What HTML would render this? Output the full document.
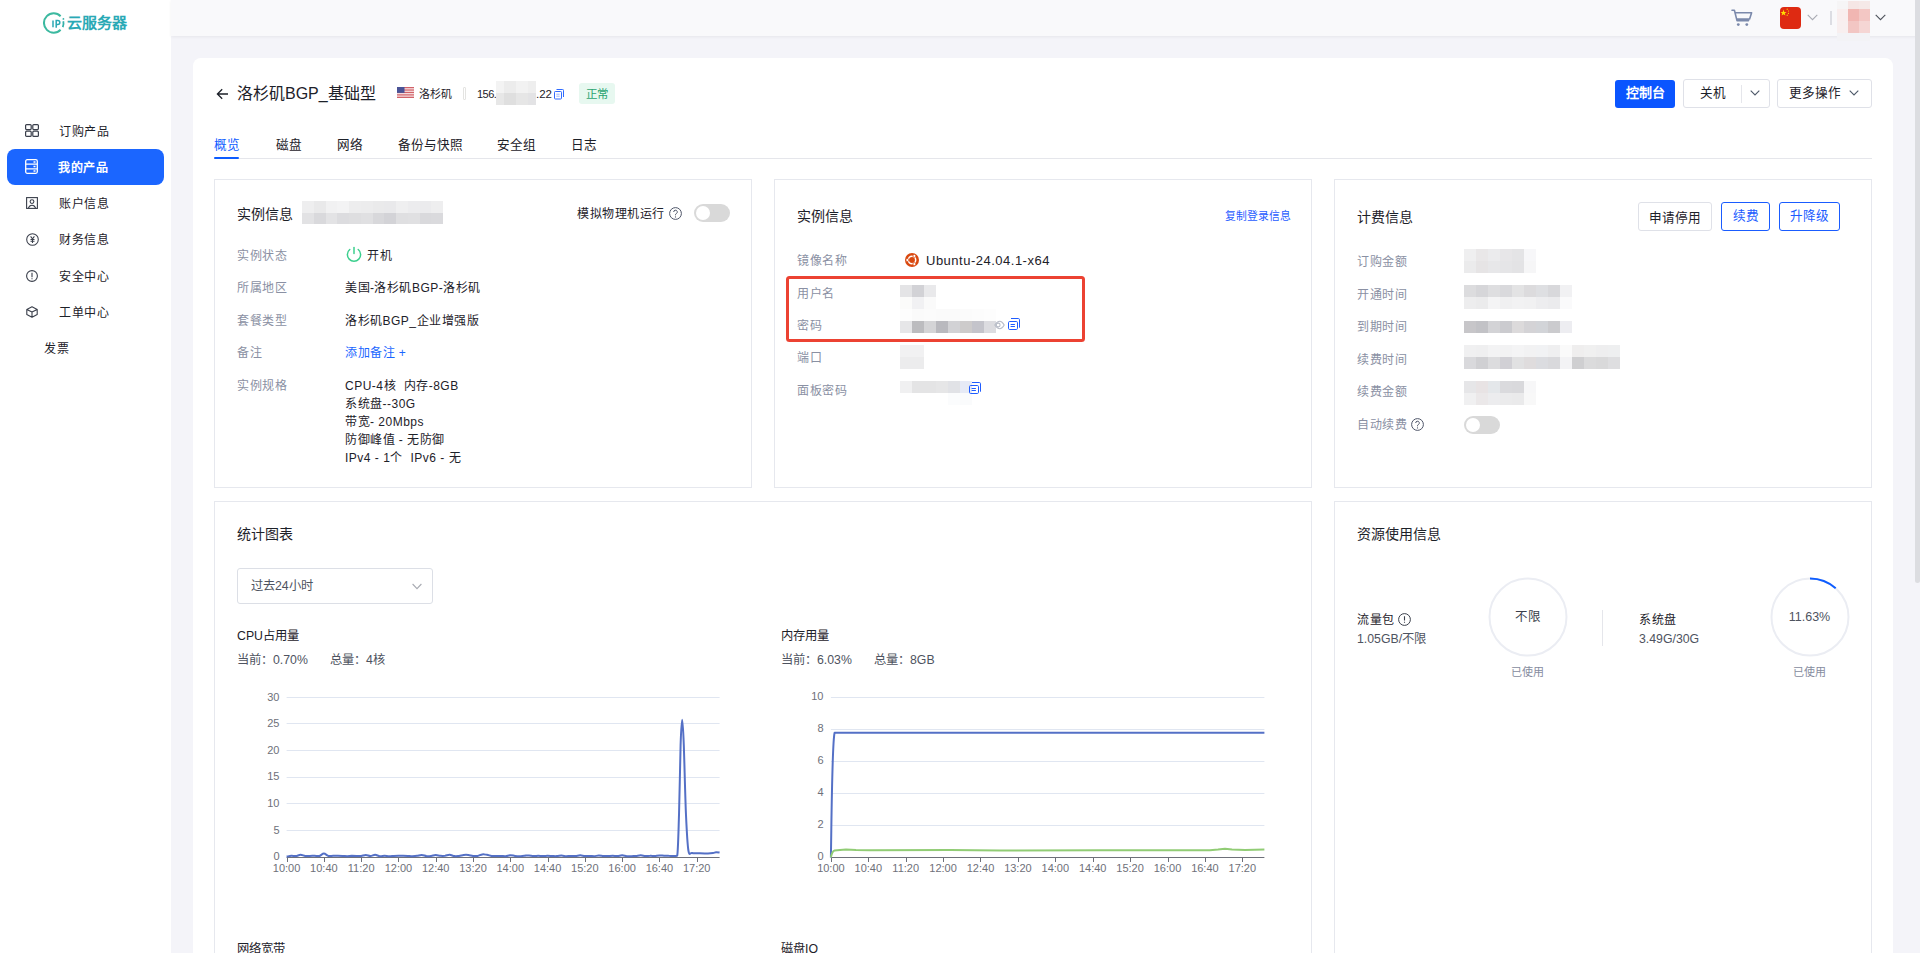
<!DOCTYPE html>
<html lang="zh-CN"><head><meta charset="utf-8">
<style>
*{box-sizing:border-box;margin:0;padding:0}
html,body{width:1920px;height:953px;overflow:hidden}
body{position:relative;background:#f4f4f9;font-family:"Liberation Sans",sans-serif;color:#1d2129;font-size:12.6px}
.a{position:absolute;white-space:nowrap}
#side{position:absolute;left:0;top:0;width:171px;height:953px;background:#fff}
#hdr{position:absolute;left:171px;top:0;width:1749px;height:36px;background:#f9f9fb;box-shadow:0 1px 3px rgba(0,0,0,0.06)}
.nav{position:absolute;left:59px;font-size:12px;letter-spacing:0.5px;color:#1d2129;line-height:20px}
.nic{position:absolute;left:25px}
#main{position:absolute;left:193px;top:58px;width:1700px;height:920px;background:#fff;border-radius:8px}
.card{position:absolute;border:1px solid #e6e8ee;background:#fff}
.ttl{position:absolute;font-size:14px;color:#1d2129;line-height:18px;white-space:nowrap}
.lbl{position:absolute;font-size:12px;letter-spacing:0.5px;color:#8a90a3;line-height:20px;white-space:nowrap}
.val{position:absolute;font-size:12px;letter-spacing:0.5px;color:#1d2129;line-height:20px;white-space:nowrap}
.blur{position:absolute;display:grid}
.blur i{display:block;width:12px;height:12px}
.btn{position:absolute;border:1px solid #dfe1e8;border-radius:3px;background:#fff;font-size:12.6px;color:#1d2129;text-align:center}
.tog{position:absolute;width:36px;height:18px;border-radius:9px;background:#d9d9d9}
.tog:after{content:"";position:absolute;left:2px;top:2px;width:14px;height:14px;border-radius:50%;background:#fff}
.ax{position:absolute;font-size:11.2px;color:#6e7079;line-height:12px;white-space:nowrap}
</style></head><body>

<!-- sidebar -->
<div id="side">
  <svg class="a" style="left:43px;top:12px" width="22" height="22" viewBox="0 0 22 22">
    <path d="M17.6 4.2 A9.7 9.7 0 1 0 17.6 17.8" fill="none" stroke="#3cb9a0" stroke-width="2"/>
    <path d="M20.3 9.2 A9.7 9.7 0 0 1 19.8 15.2" fill="none" stroke="#35b1a8" stroke-width="1.8"/>
    <circle cx="20.4" cy="6.9" r="0.9" fill="#35b1a8"/>
    <path d="M10 8.4v6.8" fill="none" stroke="#2aa7b3" stroke-width="1.5"/>
    <path d="M13.2 15.8V8.5h1.6a2 2 0 0 1 0 4h-1.6" fill="none" stroke="#2aa7b3" stroke-width="1.5"/>
  </svg>
  <div class="a" style="left:67px;top:13px;font-size:15px;font-weight:bold;color:#2aa9b5;line-height:20px;letter-spacing:0">云服务器</div>

  <div class="a" style="left:7px;top:149px;width:157px;height:36px;border-radius:8px;background:#1b66ff"></div>

  <svg class="nic" style="top:124px" width="14" height="13" viewBox="0 0 14 13"><g fill="none" stroke="#3a3f4b" stroke-width="1.2"><rect x="0.6" y="0.6" width="5.6" height="5" rx="1"/><rect x="7.8" y="0.6" width="5.6" height="5" rx="1"/><rect x="0.6" y="7.2" width="5.6" height="5.2" rx="1"/><rect x="7.8" y="7.2" width="5.6" height="5.2" rx="1"/></g></svg>
  <div class="nav" style="top:122px">订购产品</div>

  <svg class="nic" style="top:159px" width="13" height="15" viewBox="0 0 13 15"><g fill="none" stroke="#fff" stroke-width="1.3"><rect x="0.7" y="0.7" width="11.6" height="13.6" rx="1.5"/><path d="M0.7 5.2h11.6M0.7 9.8h11.6M8.5 3h2M8.5 7.5h2M8.5 12h2"/></g></svg>
  <div class="nav" style="left:58px;top:158px;color:#fff;font-weight:bold">我的产品</div>

  <svg class="nic" style="left:26px;top:197px" width="12" height="12" viewBox="0 0 12 12"><g fill="none" stroke="#3a3f4b" stroke-width="1.1"><rect x="0.6" y="0.6" width="10.8" height="10.8"/><circle cx="6" cy="4.6" r="1.9"/><path d="M2.4 11.2c0.6-2 2-3 3.6-3s3 1 3.6 3"/></g></svg>
  <div class="nav" style="top:194px">账户信息</div>

  <svg class="nic" style="left:26px;top:233px" width="13" height="13" viewBox="0 0 13 13"><g fill="none" stroke="#3a3f4b" stroke-width="1.05"><circle cx="6.5" cy="6.5" r="5.8"/><path d="M4.6 3.4L6.5 5.9L8.4 3.4M6.5 5.9v4.2M4.5 6.5h4M4.5 8.2h4"/></g></svg>
  <div class="nav" style="top:230px">财务信息</div>

  <svg class="nic" style="left:26px;top:270px" width="12" height="12" viewBox="0 0 12 12"><g fill="none" stroke="#3a3f4b" stroke-width="1.1"><circle cx="6" cy="6" r="5.4"/><path d="M6 2.8v4.4M6 8.3v1"/></g></svg>
  <div class="nav" style="top:267px">安全中心</div>

  <svg class="nic" style="left:26px;top:306px" width="12" height="12" viewBox="0 0 12 12"><g fill="none" stroke="#3a3f4b" stroke-width="1.1" stroke-linejoin="round"><path d="M6 0.7L11.2 3.4V8.6L6 11.3L0.8 8.6V3.4Z M0.8 3.4L6 6.1L11.2 3.4M6 6.1v5.2"/></g></svg>
  <div class="nav" style="top:303px">工单中心</div>

  <div class="nav" style="left:44px;top:339px">发票</div>
</div>

<!-- header -->
<div id="hdr"></div>

<!-- scrollbar thumb -->
<div class="a" style="left:1915px;top:0;width:5px;height:583px;background:#dcdde1;border-radius:0 0 3px 3px"></div>

<!-- main panel -->
<div id="main"></div>


<!-- header right -->
<svg class="a" style="left:1731px;top:9px" width="22" height="18" viewBox="0 0 22 18"><g fill="none" stroke="#7b89ab" stroke-width="1.6" stroke-linecap="round" stroke-linejoin="round"><path d="M1 1.2h2.4l2.6 10.4h11.6M4.4 3.8H20.6l-2 6.2H6"/></g><circle cx="7.3" cy="15.6" r="1.4" fill="#7b89ab"/><circle cx="15.8" cy="15.6" r="1.4" fill="#7b89ab"/></svg>
<div class="a" style="left:1780px;top:7px;width:21px;height:22px;border-radius:4px;background:#de2a12;overflow:hidden">
  <svg width="21" height="22" viewBox="0 0 21 22" style="position:absolute;left:0;top:0"><polygon points="3.5,2.6 4.3,4.9 6.6,4.9 4.8,6.3 5.4,8.6 3.5,7.2 1.6,8.6 2.2,6.3 0.4,4.9 2.7,4.9" fill="#ffde00"/><circle cx="7.2" cy="2.2" r="0.6" fill="#ffde00"/><circle cx="8.5" cy="4" r="0.6" fill="#ffde00"/><circle cx="8.5" cy="6.3" r="0.6" fill="#ffde00"/><circle cx="7.2" cy="8.2" r="0.6" fill="#ffde00"/></svg>
</div>
<svg class="a" style="left:1807px;top:14px" width="11" height="7" viewBox="0 0 11 7"><path d="M0.7 0.8L5.5 5.6L10.3 0.8" fill="none" stroke="#a9abb3" stroke-width="1.1"/></svg>
<div class="a" style="left:1830px;top:11px;width:1.5px;height:14px;background:#dcdde3"></div>
<div class="blur" style="left:1837px;top:1px;grid-template-columns:11px 11px 11px;grid-auto-rows:8px 12px 12px 8px">
  <i style="width:11px;height:8px;background:#f6f5f6"></i><i style="width:11px;height:8px;background:#f5e6e5"></i><i style="width:11px;height:8px;background:#f5e9e8"></i>
  <i style="width:11px;height:12px;background:#f9eeee"></i><i style="width:11px;height:12px;background:#f1b6b2"></i><i style="width:11px;height:12px;background:#f3c7c4"></i>
  <i style="width:11px;height:12px;background:#f8efef"></i><i style="width:11px;height:12px;background:#f2c6c3"></i><i style="width:11px;height:12px;background:#f5d6d4"></i>
  <i style="width:11px;height:8px;background:#f3f3f6"></i><i style="width:11px;height:8px;background:#f3f3f6"></i><i style="width:11px;height:8px;background:#f3f3f6"></i>
</div>
<svg class="a" style="left:1875px;top:14px" width="11" height="7" viewBox="0 0 11 7"><path d="M0.7 0.8L5.5 5.6L10.3 0.8" fill="none" stroke="#4e525c" stroke-width="1.1"/></svg>

<!-- page header -->
<svg class="a" style="left:216px;top:88px" width="13" height="12" viewBox="0 0 13 12"><path d="M12 6H1.5M6.2 1.2L1.4 6L6.2 10.8" fill="none" stroke="#1d2129" stroke-width="1.3"/></svg>
<div class="a" style="left:237px;top:84px;font-size:16px;line-height:20px;color:#1d2129">洛杉矶BGP_基础型</div>
<svg class="a" style="left:397px;top:87px" width="17" height="11" viewBox="0 0 17 11"><rect width="17" height="11" fill="#fff"/><g fill="#c9474f"><rect y="0" width="17" height="0.85"/><rect y="1.7" width="17" height="0.85"/><rect y="3.4" width="17" height="0.85"/><rect y="5.1" width="17" height="0.85"/><rect y="6.8" width="17" height="0.85"/><rect y="8.5" width="17" height="0.85"/><rect y="10.15" width="17" height="0.85"/></g><rect width="7.5" height="5.9" fill="#4a5396"/></svg>
<div class="a" style="left:419px;top:86px;font-size:11px;line-height:16px;color:#1d2129">洛杉矶</div>
<div class="a" style="left:463px;top:87px;width:3px;height:13px;border:1px solid #e4e4e2;border-radius:1px"></div>
<div class="a" style="left:477px;top:86px;font-size:11px;letter-spacing:-0.5px;line-height:16px;color:#1d2129">156.</div>
<div class="blur" style="left:496px;top:81px;grid-template-columns:8px 12px 12px 8px">
  <i style="width:8px;background:#f3f3f3"></i><i style="background:#ececec"></i><i style="background:#f2f2f2"></i><i style="width:8px;background:#eeeeee"></i>
  <i style="width:8px;background:#e7e7e7"></i><i style="background:#dfdfdf"></i><i style="background:#e6e6e6"></i><i style="width:8px;background:#e3e3e5"></i>
</div>
<div class="a" style="left:536px;top:86px;font-size:11.5px;line-height:16px;color:#1d2129">.22</div>
<svg class="a" style="left:554px;top:89px" width="10" height="11" viewBox="0 0 10 11"><g fill="none" stroke="#2f6bff" stroke-width="1"><rect x="0.5" y="2.5" width="7" height="7.5" rx="0.8"/><path d="M2.5 0.5h6.2a0.8 0.8 0 0 1 0.8 0.8v6.7"/><path d="M2.3 5.2h3.4M2.3 7.2h3.4" stroke-width="0.8" stroke="#7fa4ff"/></g></svg>
<div class="a" style="left:579px;top:83px;width:36px;height:21px;border-radius:3px;background:#e7f8f0;color:#2ba471;font-size:11.5px;line-height:21px;padding-top:1px;text-align:center">正常</div>

<div class="a" style="left:1615px;top:80px;width:60px;height:28px;border-radius:3px;background:#0a55ff;color:#fff;font-size:13px;line-height:26px;text-align:center;font-weight:bold">控制台</div>
<div class="btn" style="left:1683px;top:79px;width:87px;height:29px"></div>
<div class="a" style="left:1700px;top:85px;font-size:12.6px;line-height:16px">关机</div>
<div class="a" style="left:1741px;top:85px;width:1px;height:18px;background:#e5e6eb"></div>
<svg class="a" style="left:1750px;top:90px" width="10" height="6" viewBox="0 0 10 6"><path d="M0.7 0.7L5 5L9.3 0.7" fill="none" stroke="#4e5969" stroke-width="1.1"/></svg>
<div class="btn" style="left:1777px;top:79px;width:95px;height:29px"></div>
<div class="a" style="left:1789px;top:85px;font-size:12.6px;line-height:16px">更多操作</div>
<svg class="a" style="left:1849px;top:90px" width="10" height="6" viewBox="0 0 10 6"><path d="M0.7 0.7L5 5L9.3 0.7" fill="none" stroke="#4e5969" stroke-width="1.1"/></svg>

<!-- tabs -->
<div class="a" style="left:214px;top:158px;width:1658px;height:1px;background:#e5e6eb"></div>
<div class="a" style="left:214px;top:137px;font-size:12.6px;line-height:16px;color:#0d5cff">概览</div>
<div class="a" style="left:214px;top:157px;width:25px;height:2px;background:#0d5cff;border-radius:1px"></div>
<div class="a" style="left:276px;top:137px;font-size:12.6px;line-height:16px">磁盘</div>
<div class="a" style="left:337px;top:137px;font-size:12.6px;line-height:16px">网络</div>
<div class="a" style="left:398px;top:137px;font-size:12.6px;line-height:16px">备份与快照</div>
<div class="a" style="left:497px;top:137px;font-size:12.6px;line-height:16px">安全组</div>
<div class="a" style="left:571px;top:137px;font-size:12.6px;line-height:16px">日志</div>

<div class="card" style="left:214px;top:179px;width:538px;height:309px"></div>
<div class="ttl" style="left:237px;top:205px">实例信息</div>
<div class="blur" style="left:302px;top:201px;grid-template-columns:repeat(12,11.75px)"><i style="width:11.75px;height:11.5px;background:#eeeeef"></i><i style="width:11.75px;height:11.5px;background:#e9e9ea"></i><i style="width:11.75px;height:11.5px;background:#f1f1f2"></i><i style="width:11.75px;height:11.5px;background:#f3f3f4"></i><i style="width:11.75px;height:11.5px;background:#ededee"></i><i style="width:11.75px;height:11.5px;background:#ececed"></i><i style="width:11.75px;height:11.5px;background:#eaeaeb"></i><i style="width:11.75px;height:11.5px;background:#e9e9eb"></i><i style="width:11.75px;height:11.5px;background:#efeff0"></i><i style="width:11.75px;height:11.5px;background:#ececee"></i><i style="width:11.75px;height:11.5px;background:#ebebed"></i><i style="width:11.75px;height:11.5px;background:#eeeeef"></i><i style="width:11.75px;height:11.5px;background:#e2e2e4"></i><i style="width:11.75px;height:11.5px;background:#d9d9dc"></i><i style="width:11.75px;height:11.5px;background:#e3e3e5"></i><i style="width:11.75px;height:11.5px;background:#dcdcdf"></i><i style="width:11.75px;height:11.5px;background:#dedee0"></i><i style="width:11.75px;height:11.5px;background:#e0e0e2"></i><i style="width:11.75px;height:11.5px;background:#d8d8db"></i><i style="width:11.75px;height:11.5px;background:#d3d3d7"></i><i style="width:11.75px;height:11.5px;background:#dfdfe1"></i><i style="width:11.75px;height:11.5px;background:#e0e0e2"></i><i style="width:11.75px;height:11.5px;background:#d9d9dc"></i><i style="width:11.75px;height:11.5px;background:#dadadd"></i></div>
<div class="a" style="left:577px;top:205px;font-size:12px;letter-spacing:0.5px;line-height:18px;color:#1d2129">模拟物理机运行</div>
<svg class="a" style="left:669px;top:207px" width="13" height="13" viewBox="0 0 13 13"><circle cx="6.5" cy="6.5" r="5.9" fill="none" stroke="#4e5568" stroke-width="1"/><path d="M4.7 5a1.8 1.8 0 1 1 2.6 1.6c-0.6 0.3-0.8 0.6-0.8 1.2v0.5" fill="none" stroke="#4e5568" stroke-width="1"/><circle cx="6.5" cy="9.9" r="0.6" fill="#4e5568"/></svg>
<div class="tog" style="left:694px;top:204px"></div>
<div class="lbl" style="left:237px;top:246px">实例状态</div>
<div class="lbl" style="left:237px;top:278px">所属地区</div>
<div class="lbl" style="left:237px;top:311px">套餐类型</div>
<div class="lbl" style="left:237px;top:343px">备注</div>
<div class="lbl" style="left:237px;top:376px">实例规格</div>
<svg class="a" style="left:346px;top:246px" width="16" height="17" viewBox="0 0 16 17"><path d="M3.76,3.54 A6.6,6.6 0 1 0 12.24,3.54" fill="none" stroke="#3ccf8e" stroke-width="1.5" stroke-linecap="round"/><path d="M8 1.6v6" stroke="#3ccf8e" stroke-width="1.5" stroke-linecap="round"/></svg>
<div class="val" style="left:367px;top:246px">开机</div>
<div class="val" style="left:345px;top:278px">美国-洛杉矶BGP-洛杉矶</div>
<div class="val" style="left:345px;top:311px">洛杉矶BGP_企业增强版</div>
<div class="val" style="left:345px;top:343px;color:#1a66ff">添加备注 +</div>
<div class="val" style="left:345px;top:376px">CPU-4核&nbsp;&nbsp;内存-8GB</div>
<div class="val" style="left:345px;top:394px">系统盘--30G</div>
<div class="val" style="left:345px;top:412px">带宽- 20Mbps</div>
<div class="val" style="left:345px;top:430px">防御峰值 - 无防御</div>
<div class="val" style="left:345px;top:448px">IPv4 - 1个&nbsp;&nbsp;IPv6 - 无</div>
<div class="card" style="left:774px;top:179px;width:538px;height:309px"></div>
<div class="ttl" style="left:797px;top:207px">实例信息</div>
<div class="a" style="left:1225px;top:208px;font-size:10.8px;line-height:16px;color:#1f5cff">复制登录信息</div>
<div class="lbl" style="left:797px;top:251px">镜像名称</div>
<div class="lbl" style="left:797px;top:284px">用户名</div>
<div class="lbl" style="left:797px;top:316px">密码</div>
<div class="lbl" style="left:797px;top:348px">端口</div>
<div class="lbl" style="left:797px;top:381px">面板密码</div>
<svg class="a" style="left:905px;top:253px" width="14" height="14" viewBox="0 0 14 14"><circle cx="7" cy="7" r="7" fill="#d9480f"/><circle cx="7" cy="7" r="3.7" fill="none" stroke="#fff" stroke-width="1.5"/><g fill="#fff" stroke="#d9480f" stroke-width="0.7"><circle cx="2.3" cy="7" r="1.5"/><circle cx="9.35" cy="2.93" r="1.5"/><circle cx="9.35" cy="11.07" r="1.5"/></g></svg>
<div class="val" style="left:926px;top:251px;font-size:13px">Ubuntu-24.04.1-x64</div>
<div class="a" style="left:786px;top:276px;width:299px;height:66px;border:3px solid #ec4232;border-radius:3.5px"></div>
<div class="blur" style="left:900px;top:285px;grid-template-columns:repeat(3,12px)"><i style="width:12px;height:12px;background:#e4e4e6"></i><i style="width:12px;height:12px;background:#d2d2d6"></i><i style="width:12px;height:12px;background:#e9e9eb"></i><i style="width:12px;height:12px;background:#fbfbfa"></i><i style="width:12px;height:12px;background:#f1f1f3"></i><i style="width:12px;height:12px;background:#fafafa"></i></div>
<div class="blur" style="left:900px;top:309px;grid-template-columns:repeat(8,12px)"><i style="width:12px;height:12px;background:#fdfdfd"></i><i style="width:12px;height:12px;background:#fafafa"></i><i style="width:12px;height:12px;background:#fbfbfb"></i><i style="width:12px;height:12px;background:#fafafa"></i><i style="width:12px;height:12px;background:#fafafa"></i><i style="width:12px;height:12px;background:#fbfbfb"></i><i style="width:12px;height:12px;background:#fcfcfc"></i><i style="width:12px;height:12px;background:#fdfdfd"></i><i style="width:12px;height:12px;background:#e6e6e8"></i><i style="width:12px;height:12px;background:#bcbcbf"></i><i style="width:12px;height:12px;background:#d4d4d6"></i><i style="width:12px;height:12px;background:#b9b9be"></i><i style="width:12px;height:12px;background:#d2d2d5"></i><i style="width:12px;height:12px;background:#cdcbcb"></i><i style="width:12px;height:12px;background:#c4c4cb"></i><i style="width:12px;height:12px;background:#dcdce0"></i></div>
<svg class="a" style="left:994px;top:320px" width="11" height="10" viewBox="0 0 11 10"><path d="M0.8 5c1.6-2.6 3.3-3.8 5-3.8s3 1.2 4.4 3.8c-1.4 2.6-2.7 3.8-4.4 3.8S2.4 7.6 0.8 5z" fill="none" stroke="#b9bdc8" stroke-width="1.1"/><circle cx="4.2" cy="5" r="1.9" fill="none" stroke="#b9bdc8" stroke-width="1.1"/></svg>
<svg class="a" style="left:1008px;top:318px" width="12" height="12" viewBox="0 0 12 12"><g fill="none" stroke="#1f5cff" stroke-width="1"><rect x="0.5" y="3.5" width="9" height="8" rx="1.2"/><path d="M3 0.5h7.3a1.2 1.2 0 0 1 1.2 1.2v8"/><path d="M2.6 6.5h4.3M2.6 8.5h4.3"/></g></svg>
<div class="blur" style="left:900px;top:345px;grid-template-columns:repeat(2,12px)"><i style="width:12px;height:12px;background:#f1f1f2"></i><i style="width:12px;height:12px;background:#f1f1f2"></i><i style="width:12px;height:12px;background:#ececed"></i><i style="width:12px;height:12px;background:#ececed"></i></div>
<div class="blur" style="left:900px;top:381px;grid-template-columns:repeat(6,12px)"><i style="width:12px;height:12px;background:#f0f0f1"></i><i style="width:12px;height:12px;background:#e4e4e5"></i><i style="width:12px;height:12px;background:#e4e4e5"></i><i style="width:12px;height:12px;background:#e6e6e7"></i><i style="width:12px;height:12px;background:#e1e2e6"></i><i style="width:12px;height:12px;background:#e6eaf6"></i><i style="width:12px;height:12px;background:#ffffff"></i><i style="width:12px;height:12px;background:#ffffff"></i><i style="width:12px;height:12px;background:#ffffff"></i><i style="width:12px;height:12px;background:#ffffff"></i><i style="width:12px;height:12px;background:#fbfcfd"></i><i style="width:12px;height:12px;background:#fafbfc"></i></div>
<svg class="a" style="left:969px;top:382px" width="12" height="12" viewBox="0 0 12 12"><g fill="none" stroke="#1f5cff" stroke-width="1"><rect x="0.5" y="3.5" width="9" height="8" rx="1.2"/><path d="M3 0.5h7.3a1.2 1.2 0 0 1 1.2 1.2v8"/><path d="M2.6 6.5h4.3M2.6 8.5h4.3"/></g></svg>
<div class="card" style="left:1334px;top:179px;width:538px;height:309px"></div>
<div class="ttl" style="left:1357px;top:208px">计费信息</div>
<div class="btn" style="left:1638px;top:202px;width:74px;height:29px;line-height:27px;padding-top:2px">申请停用</div>
<div class="btn" style="left:1721px;top:202px;width:49px;height:29px;line-height:25px;padding-top:1px;border:1.5px solid #1a5cff;color:#1a5cff">续费</div>
<div class="btn" style="left:1779px;top:202px;width:61px;height:29px;line-height:25px;padding-top:1px;border:1.5px solid #1a5cff;color:#1a5cff">升降级</div>
<div class="lbl" style="left:1357px;top:252px">订购金额</div>
<div class="lbl" style="left:1357px;top:285px">开通时间</div>
<div class="lbl" style="left:1357px;top:317px">到期时间</div>
<div class="lbl" style="left:1357px;top:350px">续费时间</div>
<div class="lbl" style="left:1357px;top:382px">续费金额</div>
<div class="lbl" style="left:1357px;top:415px">自动续费</div>
<svg class="a" style="left:1411px;top:418px" width="13" height="13" viewBox="0 0 13 13"><circle cx="6.5" cy="6.5" r="5.9" fill="none" stroke="#4e5568" stroke-width="1"/><path d="M4.7 5a1.8 1.8 0 1 1 2.6 1.6c-0.6 0.3-0.8 0.6-0.8 1.2v0.5" fill="none" stroke="#4e5568" stroke-width="1"/><circle cx="6.5" cy="9.9" r="0.6" fill="#4e5568"/></svg>
<div class="blur" style="left:1464px;top:249px;grid-template-columns:repeat(6,12px)"><i style="width:12px;height:12px;background:#efeff0"></i><i style="width:12px;height:12px;background:#e9e7e8"></i><i style="width:12px;height:12px;background:#ebebed"></i><i style="width:12px;height:12px;background:#e7e6e8"></i><i style="width:12px;height:12px;background:#e4e4e6"></i><i style="width:12px;height:12px;background:#f7f7f9"></i><i style="width:12px;height:12px;background:#ebebec"></i><i style="width:12px;height:12px;background:#e6e4e5"></i><i style="width:12px;height:12px;background:#e7e7e9"></i><i style="width:12px;height:12px;background:#e5e5e7"></i><i style="width:12px;height:12px;background:#e3e3e5"></i><i style="width:12px;height:12px;background:#f6f6f7"></i></div>
<div class="blur" style="left:1464px;top:285px;grid-template-columns:repeat(9,12px)"><i style="width:12px;height:12px;background:#dcdcde"></i><i style="width:12px;height:12px;background:#d6d6d9"></i><i style="width:12px;height:12px;background:#dedee0"></i><i style="width:12px;height:12px;background:#d9d9dc"></i><i style="width:12px;height:12px;background:#e3e3e4"></i><i style="width:12px;height:12px;background:#dcdbdd"></i><i style="width:12px;height:12px;background:#dedfe2"></i><i style="width:12px;height:12px;background:#d8d8db"></i><i style="width:12px;height:12px;background:#f1f1f3"></i><i style="width:12px;height:12px;background:#ededee"></i><i style="width:12px;height:12px;background:#ebebec"></i><i style="width:12px;height:12px;background:#f4f4f5"></i><i style="width:12px;height:12px;background:#f0f0f1"></i><i style="width:12px;height:12px;background:#f2f2f3"></i><i style="width:12px;height:12px;background:#f1f1f2"></i><i style="width:12px;height:12px;background:#ededef"></i><i style="width:12px;height:12px;background:#ebebed"></i><i style="width:12px;height:12px;background:#fafafb"></i></div>
<div class="blur" style="left:1464px;top:321px;grid-template-columns:repeat(9,12px)"><i style="width:12px;height:12px;background:#c7c6c9"></i><i style="width:12px;height:12px;background:#c2c2c6"></i><i style="width:12px;height:12px;background:#d3d3d6"></i><i style="width:12px;height:12px;background:#cbcbcf"></i><i style="width:12px;height:12px;background:#dcdadb"></i><i style="width:12px;height:12px;background:#d4d3d6"></i><i style="width:12px;height:12px;background:#d2d4d8"></i><i style="width:12px;height:12px;background:#cbcbce"></i><i style="width:12px;height:12px;background:#ededf1"></i></div>
<div class="blur" style="left:1464px;top:345px;grid-template-columns:repeat(13,12px)"><i style="width:12px;height:12px;background:#f0f0f1"></i><i style="width:12px;height:12px;background:#efeff0"></i><i style="width:12px;height:12px;background:#f3f3f4"></i><i style="width:12px;height:12px;background:#f2f2f3"></i><i style="width:12px;height:12px;background:#f4f4f5"></i><i style="width:12px;height:12px;background:#f2f2f3"></i><i style="width:12px;height:12px;background:#f1f2f4"></i><i style="width:12px;height:12px;background:#efeff0"></i><i style="width:12px;height:12px;background:#fafafa"></i><i style="width:12px;height:12px;background:#efeeee"></i><i style="width:12px;height:12px;background:#f0f0f0"></i><i style="width:12px;height:12px;background:#eeeeef"></i><i style="width:12px;height:12px;background:#eeeff0"></i><i style="width:12px;height:12px;background:#d9d9dc"></i><i style="width:12px;height:12px;background:#d0d0d3"></i><i style="width:12px;height:12px;background:#dcdcde"></i><i style="width:12px;height:12px;background:#d1d0d5"></i><i style="width:12px;height:12px;background:#e1e1e2"></i><i style="width:12px;height:12px;background:#dfdcdd"></i><i style="width:12px;height:12px;background:#dbdce0"></i><i style="width:12px;height:12px;background:#d9d9dc"></i><i style="width:12px;height:12px;background:#f3f3f5"></i><i style="width:12px;height:12px;background:#cfcfd1"></i><i style="width:12px;height:12px;background:#dbdbdc"></i><i style="width:12px;height:12px;background:#d9d9da"></i><i style="width:12px;height:12px;background:#dedee0"></i></div>
<div class="blur" style="left:1464px;top:381px;grid-template-columns:repeat(6,12px)"><i style="width:12px;height:12px;background:#e6e6e8"></i><i style="width:12px;height:12px;background:#e8e3e4"></i><i style="width:12px;height:12px;background:#e4e7ea"></i><i style="width:12px;height:12px;background:#dadadd"></i><i style="width:12px;height:12px;background:#d9d9dc"></i><i style="width:12px;height:12px;background:#f7f7f8"></i><i style="width:12px;height:12px;background:#f0f0f1"></i><i style="width:12px;height:12px;background:#ebe8e9"></i><i style="width:12px;height:12px;background:#ececee"></i><i style="width:12px;height:12px;background:#ebebec"></i><i style="width:12px;height:12px;background:#eaeaeb"></i><i style="width:12px;height:12px;background:#f8f8f8"></i></div>
<div class="tog" style="left:1464px;top:416px"></div>

<div class="card" style="left:214px;top:501px;width:1098px;height:470px"></div>
<div class="ttl" style="left:237px;top:525px">统计图表</div>
<div class="a" style="left:237px;top:568px;width:196px;height:36px;border:1px solid #dcdfe6;border-radius:3px"></div>
<div class="a" style="left:251px;top:577px;font-size:12.3px;line-height:18px;color:#4e5360">过去24小时</div>
<svg class="a" style="left:412px;top:583px" width="10" height="7" viewBox="0 0 10 7"><path d="M0.6 1L5 5.6L9.4 1" fill="none" stroke="#a8abb2" stroke-width="1.1"/></svg>
<div class="a" style="left:237px;top:627px;font-size:12.3px;line-height:18px;color:#1d2129">CPU占用量</div>
<div class="a" style="left:237px;top:651px;font-size:12.3px;line-height:18px;color:#4e5360">当前：0.70%</div>
<div class="a" style="left:330px;top:651px;font-size:12.3px;line-height:18px;color:#4e5360">总量：4核</div>
<div class="a" style="left:781px;top:627px;font-size:12.3px;line-height:18px;color:#1d2129">内存用量</div>
<div class="a" style="left:781px;top:651px;font-size:12.3px;line-height:18px;color:#4e5360">当前：6.03%</div>
<div class="a" style="left:874px;top:651px;font-size:12.3px;line-height:18px;color:#4e5360">总量：8GB</div>
<div class="a" style="left:237px;top:940px;font-size:12.3px;line-height:18px;color:#1d2129">网络宽带</div>
<div class="a" style="left:781px;top:940px;font-size:12.3px;line-height:18px;color:#1d2129">磁盘IO</div>
<svg class="a" style="left:0;top:0" width="1920" height="953" viewBox="0 0 1920 953"><line x1="286.6" y1="697.5" x2="719.6" y2="697.5" stroke="#e0e6f1" stroke-width="1"/><text x="279.5" y="700.5" text-anchor="end" font-size="11" fill="#6e7079" font-family="Liberation Sans">30</text><line x1="286.6" y1="723.5" x2="719.6" y2="723.5" stroke="#e0e6f1" stroke-width="1"/><text x="279.5" y="727.1" text-anchor="end" font-size="11" fill="#6e7079" font-family="Liberation Sans">25</text><line x1="286.6" y1="750.5" x2="719.6" y2="750.5" stroke="#e0e6f1" stroke-width="1"/><text x="279.5" y="753.7" text-anchor="end" font-size="11" fill="#6e7079" font-family="Liberation Sans">20</text><line x1="286.6" y1="777.5" x2="719.6" y2="777.5" stroke="#e0e6f1" stroke-width="1"/><text x="279.5" y="780.3" text-anchor="end" font-size="11" fill="#6e7079" font-family="Liberation Sans">15</text><line x1="286.6" y1="803.5" x2="719.6" y2="803.5" stroke="#e0e6f1" stroke-width="1"/><text x="279.5" y="806.9" text-anchor="end" font-size="11" fill="#6e7079" font-family="Liberation Sans">10</text><line x1="286.6" y1="830.5" x2="719.6" y2="830.5" stroke="#e0e6f1" stroke-width="1"/><text x="279.5" y="833.5" text-anchor="end" font-size="11" fill="#6e7079" font-family="Liberation Sans">5</text><text x="279.5" y="860.0" text-anchor="end" font-size="11" fill="#6e7079" font-family="Liberation Sans">0</text><line x1="286.6" y1="857.5" x2="719.6" y2="857.5" stroke="#6e7079" stroke-width="1"/><line x1="287.5" y1="857" x2="287.5" y2="862" stroke="#6e7079" stroke-width="1"/><text x="286.6" y="871.5" text-anchor="middle" font-size="11" fill="#6e7079" font-family="Liberation Sans">10:00</text><line x1="324.5" y1="857" x2="324.5" y2="862" stroke="#6e7079" stroke-width="1"/><text x="323.88" y="871.5" text-anchor="middle" font-size="11" fill="#6e7079" font-family="Liberation Sans">10:40</text><line x1="361.5" y1="857" x2="361.5" y2="862" stroke="#6e7079" stroke-width="1"/><text x="361.16" y="871.5" text-anchor="middle" font-size="11" fill="#6e7079" font-family="Liberation Sans">11:20</text><line x1="398.5" y1="857" x2="398.5" y2="862" stroke="#6e7079" stroke-width="1"/><text x="398.44000000000005" y="871.5" text-anchor="middle" font-size="11" fill="#6e7079" font-family="Liberation Sans">12:00</text><line x1="436.5" y1="857" x2="436.5" y2="862" stroke="#6e7079" stroke-width="1"/><text x="435.72" y="871.5" text-anchor="middle" font-size="11" fill="#6e7079" font-family="Liberation Sans">12:40</text><line x1="473.5" y1="857" x2="473.5" y2="862" stroke="#6e7079" stroke-width="1"/><text x="473.0" y="871.5" text-anchor="middle" font-size="11" fill="#6e7079" font-family="Liberation Sans">13:20</text><line x1="510.5" y1="857" x2="510.5" y2="862" stroke="#6e7079" stroke-width="1"/><text x="510.28000000000003" y="871.5" text-anchor="middle" font-size="11" fill="#6e7079" font-family="Liberation Sans">14:00</text><line x1="548.5" y1="857" x2="548.5" y2="862" stroke="#6e7079" stroke-width="1"/><text x="547.5600000000001" y="871.5" text-anchor="middle" font-size="11" fill="#6e7079" font-family="Liberation Sans">14:40</text><line x1="585.5" y1="857" x2="585.5" y2="862" stroke="#6e7079" stroke-width="1"/><text x="584.84" y="871.5" text-anchor="middle" font-size="11" fill="#6e7079" font-family="Liberation Sans">15:20</text><line x1="622.5" y1="857" x2="622.5" y2="862" stroke="#6e7079" stroke-width="1"/><text x="622.12" y="871.5" text-anchor="middle" font-size="11" fill="#6e7079" font-family="Liberation Sans">16:00</text><line x1="659.5" y1="857" x2="659.5" y2="862" stroke="#6e7079" stroke-width="1"/><text x="659.4000000000001" y="871.5" text-anchor="middle" font-size="11" fill="#6e7079" font-family="Liberation Sans">16:40</text><line x1="697.5" y1="857" x2="697.5" y2="862" stroke="#6e7079" stroke-width="1"/><text x="696.6800000000001" y="871.5" text-anchor="middle" font-size="11" fill="#6e7079" font-family="Liberation Sans">17:20</text><path d="M286.6,856.6 C287.4,856.5 289.7,855.9 291.3,855.8 C292.8,855.7 294.4,856.2 295.9,856.1 C297.5,855.9 299.0,854.8 300.6,854.8 C302.1,854.8 303.7,855.8 305.2,856.0 C306.8,856.2 308.3,856.0 309.9,855.9 C311.5,855.9 313.0,855.8 314.6,855.8 C316.1,855.8 317.7,856.4 319.2,856.0 C320.8,855.6 322.3,853.6 323.9,853.6 C325.4,853.6 327.0,855.6 328.5,856.0 C330.1,856.3 331.6,855.8 333.2,855.8 C334.8,855.8 336.3,855.8 337.9,855.8 C339.4,855.8 341.0,855.9 342.5,856.0 C344.1,856.0 345.6,856.2 347.2,856.2 C348.7,856.1 350.3,855.9 351.8,855.8 C353.4,855.8 354.9,855.8 356.5,855.9 C358.1,855.9 359.6,856.2 361.2,856.1 C362.7,855.9 364.3,855.0 365.8,855.0 C367.4,855.0 368.9,856.1 370.5,856.0 C372.0,856.0 373.6,854.8 375.1,854.8 C376.7,854.8 378.2,856.1 379.8,856.2 C381.4,856.4 382.9,855.8 384.5,855.8 C386.0,855.8 387.6,856.2 389.1,856.2 C390.7,856.2 392.2,856.0 393.8,855.9 C395.3,855.8 396.9,855.8 398.4,855.8 C400.0,855.8 401.5,855.8 403.1,855.8 C404.7,855.8 406.2,855.8 407.8,855.9 C409.3,856.0 410.9,856.2 412.4,856.2 C414.0,856.1 415.5,856.0 417.1,855.8 C418.6,855.6 420.2,855.0 421.7,855.0 C423.3,855.0 424.8,855.9 426.4,856.1 C428.0,856.2 429.5,856.1 431.1,855.9 C432.6,855.8 434.2,855.1 435.7,855.1 C437.3,855.1 438.8,855.7 440.4,855.8 C441.9,855.9 443.5,855.9 445.0,855.8 C446.6,855.6 448.1,854.7 449.7,854.8 C451.3,854.9 452.8,855.9 454.4,856.1 C455.9,856.3 457.5,856.1 459.0,856.0 C460.6,855.8 462.1,855.2 463.7,855.0 C465.2,854.8 466.8,854.8 468.3,855.0 C469.9,855.2 471.4,855.8 473.0,856.0 C474.6,856.1 476.1,856.2 477.7,855.9 C479.2,855.6 480.8,854.6 482.3,854.4 C483.9,854.2 485.4,854.6 487.0,854.8 C488.5,855.0 490.1,855.7 491.6,855.9 C493.2,856.1 494.7,856.0 496.3,856.0 C497.9,856.1 499.4,856.0 501.0,856.0 C502.5,856.0 504.1,856.3 505.6,856.2 C507.2,856.1 508.7,855.2 510.3,855.2 C511.8,855.2 513.4,855.7 514.9,855.9 C516.5,856.1 518.0,856.3 519.6,856.2 C521.2,856.2 522.7,855.9 524.3,855.8 C525.8,855.7 527.4,855.3 528.9,855.4 C530.5,855.5 532.0,856.1 533.6,856.1 C535.1,856.2 536.7,855.8 538.2,855.8 C539.8,855.8 541.3,856.0 542.9,856.0 C544.5,856.0 546.0,855.8 547.6,855.8 C549.1,855.8 550.7,856.0 552.2,856.1 C553.8,856.1 555.3,856.2 556.9,856.1 C558.4,856.1 560.0,855.6 561.5,855.6 C563.1,855.6 564.6,856.1 566.2,856.2 C567.8,856.2 569.3,855.9 570.9,855.9 C572.4,855.9 574.0,856.2 575.5,856.1 C577.1,856.0 578.6,855.3 580.2,855.3 C581.7,855.3 583.3,855.9 584.8,856.0 C586.4,856.2 587.9,856.0 589.5,856.0 C591.1,856.0 592.6,856.2 594.2,856.2 C595.7,856.1 597.3,855.5 598.8,855.5 C600.4,855.5 601.9,855.9 603.5,856.0 C605.0,856.1 606.6,856.1 608.1,856.1 C609.7,856.0 611.2,855.8 612.8,855.8 C614.4,855.8 615.9,856.2 617.5,856.1 C619.0,856.0 620.6,855.3 622.1,855.3 C623.7,855.3 625.2,856.1 626.8,856.2 C628.3,856.4 629.9,856.2 631.4,856.2 C633.0,856.1 634.5,856.0 636.1,855.9 C637.7,855.7 639.2,855.3 640.8,855.3 C642.3,855.3 643.9,856.0 645.4,856.1 C647.0,856.2 648.5,855.8 650.1,855.8 C651.6,855.7 653.2,856.0 654.7,856.0 C656.3,855.9 657.8,855.4 659.4,855.4 C661.0,855.4 662.5,855.7 664.1,855.8 C665.6,855.9 667.2,855.7 668.7,855.8 C670.3,855.8 672.0,856.2 673.4,856.1 C674.8,856.1 676.6,856.0 677.2,855.6 C678.0,853.0 678.4,833.4 679.0,815.0 C679.6,796.6 680.1,760.9 680.6,745.0 C681.1,729.1 681.7,719.8 682.2,719.8 C682.7,719.8 683.2,729.1 683.8,745.0 C684.4,760.9 685.2,797.4 686.0,815.0 C686.8,832.6 687.4,844.2 688.4,850.5 C689.4,856.8 690.1,852.5 692.0,853.0 C693.9,853.5 697.3,853.1 700.0,853.2 C702.7,853.3 705.8,853.4 708.0,853.4 C710.2,853.4 711.7,853.2 713.0,853.0 C714.3,852.8 714.9,852.3 716.0,852.2 C717.1,852.1 719.0,852.5 719.6,852.6" fill="none" stroke="#5470c6" stroke-width="2" stroke-linejoin="round"/><line x1="830.9" y1="697.5" x2="1264.4" y2="697.5" stroke="#e0e6f1" stroke-width="1"/><text x="823.5" y="700.2" text-anchor="end" font-size="11" fill="#6e7079" font-family="Liberation Sans">10</text><line x1="830.9" y1="729.5" x2="1264.4" y2="729.5" stroke="#e0e6f1" stroke-width="1"/><text x="823.5" y="732.2" text-anchor="end" font-size="11" fill="#6e7079" font-family="Liberation Sans">8</text><line x1="830.9" y1="761.5" x2="1264.4" y2="761.5" stroke="#e0e6f1" stroke-width="1"/><text x="823.5" y="764.3" text-anchor="end" font-size="11" fill="#6e7079" font-family="Liberation Sans">6</text><line x1="830.9" y1="793.5" x2="1264.4" y2="793.5" stroke="#e0e6f1" stroke-width="1"/><text x="823.5" y="796.4" text-anchor="end" font-size="11" fill="#6e7079" font-family="Liberation Sans">4</text><line x1="830.9" y1="825.5" x2="1264.4" y2="825.5" stroke="#e0e6f1" stroke-width="1"/><text x="823.5" y="828.4" text-anchor="end" font-size="11" fill="#6e7079" font-family="Liberation Sans">2</text><text x="823.5" y="860.0" text-anchor="end" font-size="11" fill="#6e7079" font-family="Liberation Sans">0</text><line x1="830.9" y1="857.5" x2="1264.4" y2="857.5" stroke="#6e7079" stroke-width="1"/><line x1="831.5" y1="857" x2="831.5" y2="862" stroke="#6e7079" stroke-width="1"/><text x="830.9" y="871.5" text-anchor="middle" font-size="11" fill="#6e7079" font-family="Liberation Sans">10:00</text><line x1="868.5" y1="857" x2="868.5" y2="862" stroke="#6e7079" stroke-width="1"/><text x="868.3" y="871.5" text-anchor="middle" font-size="11" fill="#6e7079" font-family="Liberation Sans">10:40</text><line x1="906.5" y1="857" x2="906.5" y2="862" stroke="#6e7079" stroke-width="1"/><text x="905.6999999999999" y="871.5" text-anchor="middle" font-size="11" fill="#6e7079" font-family="Liberation Sans">11:20</text><line x1="943.5" y1="857" x2="943.5" y2="862" stroke="#6e7079" stroke-width="1"/><text x="943.0999999999999" y="871.5" text-anchor="middle" font-size="11" fill="#6e7079" font-family="Liberation Sans">12:00</text><line x1="980.5" y1="857" x2="980.5" y2="862" stroke="#6e7079" stroke-width="1"/><text x="980.5" y="871.5" text-anchor="middle" font-size="11" fill="#6e7079" font-family="Liberation Sans">12:40</text><line x1="1018.5" y1="857" x2="1018.5" y2="862" stroke="#6e7079" stroke-width="1"/><text x="1017.9" y="871.5" text-anchor="middle" font-size="11" fill="#6e7079" font-family="Liberation Sans">13:20</text><line x1="1055.5" y1="857" x2="1055.5" y2="862" stroke="#6e7079" stroke-width="1"/><text x="1055.3" y="871.5" text-anchor="middle" font-size="11" fill="#6e7079" font-family="Liberation Sans">14:00</text><line x1="1093.5" y1="857" x2="1093.5" y2="862" stroke="#6e7079" stroke-width="1"/><text x="1092.7" y="871.5" text-anchor="middle" font-size="11" fill="#6e7079" font-family="Liberation Sans">14:40</text><line x1="1130.5" y1="857" x2="1130.5" y2="862" stroke="#6e7079" stroke-width="1"/><text x="1130.1" y="871.5" text-anchor="middle" font-size="11" fill="#6e7079" font-family="Liberation Sans">15:20</text><line x1="1168.5" y1="857" x2="1168.5" y2="862" stroke="#6e7079" stroke-width="1"/><text x="1167.5" y="871.5" text-anchor="middle" font-size="11" fill="#6e7079" font-family="Liberation Sans">16:00</text><line x1="1205.5" y1="857" x2="1205.5" y2="862" stroke="#6e7079" stroke-width="1"/><text x="1204.9" y="871.5" text-anchor="middle" font-size="11" fill="#6e7079" font-family="Liberation Sans">16:40</text><line x1="1242.5" y1="857" x2="1242.5" y2="862" stroke="#6e7079" stroke-width="1"/><text x="1242.3" y="871.5" text-anchor="middle" font-size="11" fill="#6e7079" font-family="Liberation Sans">17:20</text><path d="M830.9,857.4 C831.8,800 832.2,742 834.6,732.8 L1264.4,732.8" fill="none" stroke="#5470c6" stroke-width="2" stroke-linejoin="round"/><path d="M830.9,857.4 C831.8,853 832.4,851 834.6,850.6 L840,850 L846,849.4 L856,849.9 L870,850.2 L950,850.1 L1000,850.4 L1100,850.3 L1210,850.3 L1218,849.6 L1225,848.8 L1232,849.6 L1245,850 L1264.4,849.5" fill="none" stroke="#91cc75" stroke-width="2" stroke-linejoin="round"/></svg>
<div class="card" style="left:1334px;top:501px;width:538px;height:470px"></div>
<div class="ttl" style="left:1357px;top:525px">资源使用信息</div>
<div class="a" style="left:1357px;top:611px;font-size:12px;letter-spacing:0.5px;line-height:18px;color:#1d2129">流量包</div>
<svg class="a" style="left:1398px;top:613px" width="13" height="13" viewBox="0 0 13 13"><circle cx="6.5" cy="6.5" r="5.9" fill="none" stroke="#3a3f4b" stroke-width="1"/><path d="M6.5 3.3v4.2M6.5 8.8v1" stroke="#3a3f4b" stroke-width="1.1"/></svg>
<div class="a" style="left:1357px;top:630px;font-size:12.3px;line-height:18px;color:#4e5360">1.05GB/不限</div>
<svg class="a" style="left:1486px;top:575px" width="84" height="84" viewBox="0 0 84 84"><circle cx="42" cy="42" r="38.5" fill="none" stroke="#ebedf3" stroke-width="2"/></svg>
<div class="a" style="left:1487px;top:608px;width:81px;text-align:center;font-size:12.5px;line-height:18px;color:#3a3f4b">不限</div>
<div class="a" style="left:1487px;top:664px;width:81px;text-align:center;font-size:11px;line-height:16px;color:#868c9e">已使用</div>
<div class="a" style="left:1602px;top:610px;width:1px;height:36px;background:#e5e6eb"></div>
<div class="a" style="left:1639px;top:611px;font-size:12px;letter-spacing:0.5px;line-height:18px;color:#1d2129">系统盘</div>
<div class="a" style="left:1639px;top:630px;font-size:12.3px;line-height:18px;color:#4e5360">3.49G/30G</div>
<svg class="a" style="left:1768px;top:575px" width="84" height="84" viewBox="0 0 84 84"><circle cx="42" cy="42" r="38.5" fill="none" stroke="#ebedf3" stroke-width="2"/><path d="M42,3.5 A38.5,38.5 0 0 1 67.70,13.33" fill="none" stroke="#0d5cff" stroke-width="2"/></svg>
<div class="a" style="left:1769px;top:608px;width:81px;text-align:center;font-size:12.5px;line-height:18px;color:#4e5360">11.63%</div>
<div class="a" style="left:1769px;top:664px;width:81px;text-align:center;font-size:11px;line-height:16px;color:#868c9e">已使用</div>

</body></html>
